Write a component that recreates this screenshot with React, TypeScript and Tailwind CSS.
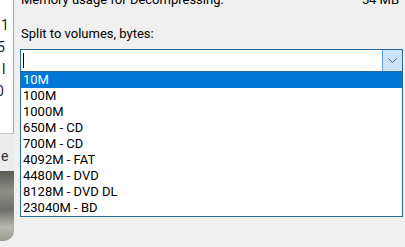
const SIZES = [
  "10M",
  "100M",
  "1000M",
  "650M - CD",
  "700M - CD",
  "4092M - FAT",
  "4480M - DVD",
  "8128M - DVD DL",
  "23040M - BD",
];

export default function App() {
  return (
    <div className="relative flex h-[247px] w-[405px] overflow-hidden bg-[#f0f0f0] font-['Roboto',sans-serif] text-[13px] text-black">
      {/* window behind the dialog */}
      <div className="flex w-[14px] shrink-0 flex-col">
        <div className="flex h-[133px] flex-col border-r border-[#a8a8a8] bg-white pt-[14px] text-[14px] leading-[22px] text-[#222]">
          <span className="pl-[1px]">1</span>
          <span className="-ml-[3px]">5</span>
          <span className="pl-[2px]">l</span>
          <span className="-ml-[4px]">0</span>
        </div>
        <div className="h-[38px] border-t border-[#c8c8c8] bg-[#ececec] pt-[14px] text-[14px] leading-[16px] text-[#333]">
          <span className="pl-[1px]">e</span>
        </div>
        <div className="h-[70px] rounded-br-[10px] bg-[linear-gradient(180deg,#5a5a55_0%,#8f8f88_30%,#6d6d68_55%,#b8b8b0_80%,#9a9a92_100%)]" />
      </div>

      {/* dialog */}
      <div className="flex min-w-0 flex-1 flex-col pl-[6px] pr-[2px]">
        <div className="-mt-[8px] flex justify-between pl-[1px] pr-[4px] leading-[16px]">
          <span>Memory usage for Decompressing:</span>
          <span>54 MB</span>
        </div>
        <div className="mt-[18px] pl-[1px] leading-[16px]">Split to volumes, bytes:</div>

        <div className="mt-[7px] flex h-[23px] border border-[#2a6a9c] bg-white">
          <div className="flex flex-1 items-center pl-[2px]">
            <span className="h-[15px] w-px bg-black" />
          </div>
          <div className="flex w-[20px] items-center justify-center border-l border-[#569de5] bg-[#cce4f7]">
            <svg width="9" height="5" viewBox="0 0 9 5" fill="none">
              <path d="M0.5 0.5 L4.5 4.5 L8.5 0.5" stroke="#606060" strokeWidth="1" />
            </svg>
          </div>
        </div>

        <ul className="flex flex-col border border-t-0 border-[#2a6a9c] bg-white">
          {SIZES.map((s, i) => (
            <li
              key={s}
              className={`h-[16px] pl-[2px] leading-[16px] ${
                i === 0 ? "bg-[#0078d7] text-white" : "text-black"
              }`}
            >
              {s}
            </li>
          ))}
        </ul>
      </div>
    </div>
  );
}
